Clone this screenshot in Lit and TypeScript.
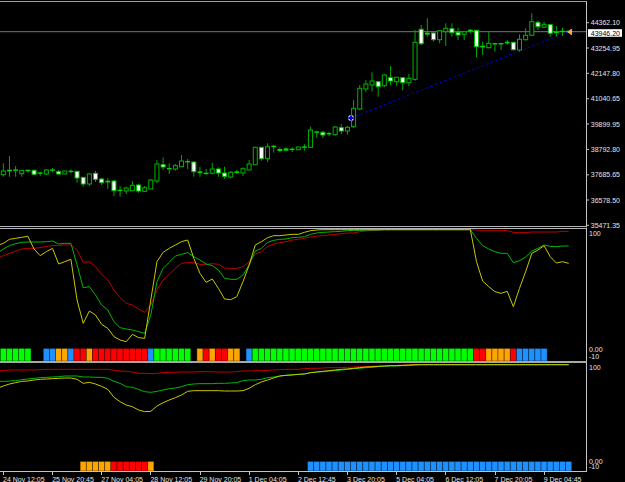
import { LitElement, html, svg, css } from "lit";
import { customElement } from "lit/decorators.js";

// bars sit on a fixed step, everything below is in page pixels
const barX = (i: number) => 3.33 + i * 6.145;
const flat = (n: number, v: number) => Array(n).fill(v) as number[];
const rep = (n: number, c: string) => c.repeat(n);

type Candle = [number, number, number, number, "h" | "w" | "g"];

const CANDLES: Candle[] = [
  [171, 174.7, 163.3, 176.7, "h"], [170, 171.7, 156, 176.7, "g"], [169.7, 171, 166, 176.7, "g"],
  [170.3, 173.7, 170.3, 176.7, "h"], [170, 171.7, 170, 172.7, "g"], [170.3, 174.3, 169.7, 175, "w"],
  [172.7, 173.7, 171.7, 176, "g"], [170, 174, 169.3, 175, "h"], [169.7, 170.7, 168, 172.3, "g"],
  [171.7, 174, 170, 174.3, "w"], [171, 174, 171, 174.3, "h"], [171, 171.7, 169.3, 173.3, "g"],
  [171.3, 178, 171.3, 182.7, "w"], [177.3, 184, 177.3, 186.7, "w"], [174, 184, 173.3, 186, "h"],
  [173.3, 179.3, 171, 182, "w"], [179, 182.7, 177.7, 185, "w"], [181, 182.7, 178.3, 189, "g"],
  [181, 190.7, 180, 196, "w"], [190, 191, 186, 196.7, "g"], [188, 191, 186.7, 194, "h"],
  [185.3, 190.7, 181, 191.3, "h"], [185, 191, 184, 192.7, "w"], [187.7, 191.3, 186, 192, "h"],
  [180, 189, 179, 189, "h"], [164, 181, 160, 183.3, "h"], [164.7, 167, 157.3, 170, "w"],
  [168.3, 169, 163.3, 174, "g"], [165.7, 169, 164, 170.7, "h"], [161, 166.7, 155, 167.3, "h"],
  [161.3, 162.3, 159, 169.3, "g"], [162, 171.7, 162, 176.7, "w"], [171.7, 173.3, 167, 176.7, "g"],
  [173, 174, 169, 174.7, "g"], [169, 173.3, 162.7, 174.3, "h"], [169, 173, 167.3, 176.7, "w"],
  [173, 176.3, 166.7, 178.7, "w"], [172.3, 177, 171, 178.3, "h"], [171.7, 173.3, 170, 174.3, "g"],
  [168.7, 173, 167.3, 176, "h"], [164, 170, 160, 170, "h"], [147.3, 164.7, 147.3, 164.7, "h"],
  [147.3, 158.7, 147.3, 160.7, "w"], [146.7, 158.7, 143.3, 162, "h"], [146, 146.7, 145, 152.7, "g"],
  [149.3, 151.3, 147.3, 152, "g"], [148.7, 151, 147.3, 151.3, "g"], [149, 150, 147.3, 152, "g"],
  [147, 149.7, 147, 150, "h"], [146.7, 148, 144.3, 150.7, "g"], [130, 147.3, 126.7, 148, "h"],
  [131.7, 132.7, 130.7, 137.7, "g"], [132.3, 135, 131, 138, "w"], [133.3, 134.3, 131.7, 136, "g"],
  [127, 134.7, 126, 135.7, "h"], [127.7, 131, 124, 134, "w"], [127.3, 131, 126, 134.7, "h"],
  [108.3, 126.7, 100, 127.7, "h"], [88.3, 109, 85, 110.3, "h"], [84, 89, 80, 92.3, "h"],
  [81, 85, 72.3, 91.7, "h"], [81.7, 86.7, 81, 96.7, "w"], [75, 85.7, 74.3, 87.3, "h"],
  [77.7, 81, 66, 85, "w"], [77.3, 81.7, 77, 85.7, "h"], [77.7, 82.7, 77.7, 90.3, "w"],
  [78.3, 82.7, 74, 86, "h"], [42.3, 79.3, 30, 80.7, "h"], [29.3, 43.7, 25, 45, "w"],
  [33, 35, 18.3, 36.7, "g"], [33, 39.7, 31.7, 41.7, "w"], [30.7, 39.7, 30, 43.3, "h"],
  [28.3, 31.7, 23.3, 46, "h"], [28.7, 32.7, 23.3, 36.7, "w"], [32.3, 35, 27.7, 40, "w"],
  [31.7, 34.3, 31.7, 40, "h"], [30, 31.7, 29, 33.3, "g"], [30.3, 46.7, 30.3, 57.3, "w"],
  [46, 47.7, 41.7, 55, "g"], [43.3, 47.7, 32, 48.3, "h"], [43.3, 44.7, 43.3, 51.7, "g"],
  [43.3, 44.3, 43.3, 50, "g"], [42, 43.7, 40, 45, "g"], [42.3, 49.7, 41.7, 50.7, "w"],
  [39.3, 50, 34.3, 51.7, "h"], [35.3, 39.7, 28.3, 40.7, "h"], [21.7, 35.3, 13.3, 36, "h"],
  [22.3, 26.7, 20.7, 30, "w"], [24.3, 27.3, 21.7, 28, "h"], [24.7, 33.3, 24.7, 36.7, "w"],
  [32, 33, 26, 36.7, "g"], [31, 32.3, 27.7, 36, "g"], [31, 32, 31, 33, "g"],
];

// oscillator values: thirds of a pixel below the pane base, one per bar, first one is off-screen left
const UPPER = {
  base: 225,
  yellow: [
    62, 55, 43, 40, 37, 34, 72, 92, 80, 70, 117, 110, 103, 225, 295, 258, 270, 298, 310, 335, 345, 350, 328, 338, 340,
    225, 110, 82, 70, 60, 50, 45, 100, 145, 172, 162, 190, 222, 224, 215, 170, 120, 60, 50, 38, 32, 32, 30, 28, 28, 22,
    17, 15, ...flat(24, 14), 14, 110, 168, 185, 200, 205, 199, 245, 190, 140, 85, 75, 62, 95, 114, 110, 115,
  ],
  green: [
    85, 72, 62, 56, 52, 51, 51, 51, 50, 48, 57, 55, 55, 120, 188, 185, 210, 240, 255, 290, 308, 312, 315, 320, 325, 270,
    170, 130, 112, 93, 88, 83, 95, 105, 117, 122, 135, 160, 163, 163, 150, 120, 78, 70, 52, 46, 43, 42, 38, 37, 35, 28,
    24, 22, 21, 20, 19, 17, 16, 16, 15, 15, 15, ...flat(14, 14), 14, 40, 62, 72, 80, 85, 85, 113, 107, 96, 78, 70, 60,
    64, 65, 63, 63,
  ],
  red: [
    100, 92, 85, 78, 72, 70, 70, 68, 64, 62, 61, 60, 60, 75, 112, 110, 125, 148, 165, 195, 218, 235, 240, 252, 262, 240,
    195, 165, 148, 130, 115, 113, 113, 118, 118, 116, 118, 129, 130, 130, 125, 110, 88, 80, 65, 57, 53, 50, 45, 43, 40,
    36, 33, 32, 30, 28, 26, 24, 24, 20, 18, 16, 15, ...flat(14, 14), 14, 15, 16, 16, 16, 16, 17, 22, 23, 23, 21, 21, 21,
    21, 21, 19, 19,
  ],
};

const LOWER = {
  base: 360,
  yellow: [
    85, 78, 72, 68, 64, 63, 60, 58, 57, 56, 55, 54, 54, 58, 70, 67, 72, 79, 88, 112, 125, 135, 140, 150, 155, 154, 138,
    128, 120, 113, 105, 94, 92, 92, 92, 92, 92, 93, 93, 93, 92, 85, 74, 66, 60, 54, 48, 46, 45, 43, 42, 38, 36, 34, 32,
    30, 28, 27, 25, 23, 21, 20, 19, 18, 17, 17, 16, 15, 14, ...flat(25, 14),
  ],
  green: [
    64, 64, 63, 62, 59, 57, 55, 53, 52, 51, 50, 48, 48, 48, 51, 51, 52, 52, 55, 64, 70, 80, 82, 88, 95, 97, 94, 90, 86,
    84, 80, 74, 72, 71, 71, 71, 70, 70, 69, 68, 62, 60, 60, 58, 53, 51, 48, 46, 44, 43, 42, 38, 36, 35, 33, 32, 30, 28,
    26, 25, 23, 22, 20, 19, 18, 18, 17, 17, 15, ...flat(25, 14),
  ],
  red: [
    32, 32, 30, 30, 30, 30, 30, 29, 28, 28, 28, 28, 28, 28, 28, 28, 28, 28, 28, 31, 33, 34, 36, 40, 40, 41, 40, 38, 37,
    37, 36, 36, 36, 35, 35, 35, 36, 36, 36, 35, 33, 33, 32, 32, 31, 30, 29, 28, 28, 28, 26, 25, 25, 24, 23, 23, 23, 22,
    21, 20, 20, 19, 18, 18, 17, 16, 15, 15, 14, ...flat(25, 14),
  ],
};

const UPPER_BLOCKS =
  "ggggg..bboobrro" + rep(9, "r") + "b" + rep(6, "g") + ".or" + "orroo.b" + rep(36, "g") + "rroooorbbbbb";
const LOWER_BLOCKS = rep(13, ".") + "ooooo" + "rrrrrr" + "o" + rep(25, ".") + rep(43, "b");

const BLOCK_CLASS: Record<string, string> = { g: "b-green", b: "b-blue", o: "b-orange", r: "b-red" };

const PRICES: [string, number][] = [
  ["44362.10", 21.7], ["43254.95", 47], ["42147.80", 72.3], ["41040.65", 97.7], ["39899.95", 123],
  ["38792.80", 148.4], ["37685.65", 173.8], ["36578.50", 199], ["35471.35", 224.3],
];

const TIMES = [
  "24 Nov 12:05", "25 Nov 20:45", "27 Nov 04:05", "28 Nov 12:05", "29 Nov 20:05", "1 Dec 04:05",
  "2 Dec 12:45", "3 Dec 20:05", "5 Dec 04:05", "6 Dec 12:05", "7 Dec 20:05", "9 Dec 04:45",
];

@customElement("app-root")
export class AppRoot extends LitElement {
  static styles = css`
    :host {
      display: block;
      width: 625px;
      height: 482px;
      padding-top: 1px;
      box-sizing: border-box;
      background: #000;
      overflow: hidden;
      font-family: "Liberation Sans", Arial, sans-serif;
      font-size: 7px;
    }
    .pane {
      display: grid;
      grid-template-columns: 587px 38px;
    }
    .plot {
      border-right: 1px solid #c4c4c4;
      min-width: 0;
    }
    .main { height: 225px; }
    .main .plot { border-top: 1px solid #a0a0a0; }
    .ind-a { height: 135px; }
    .ind-a .plot { border-top: 3px double #b4b4b4; }
    .ind-b { height: 110px; }
    .ind-b .plot { border-top: 2px solid #a8a8a8; }
    svg {
      display: block;
      overflow: visible;
    }
    .plot svg { overflow: hidden; }
    .wick { stroke: #00a800; stroke-width: 1; }
    .body-h { fill: #000; stroke: #00b400; stroke-width: 1; }
    .body-w { fill: #fff; stroke: #00c000; stroke-width: 1; }
    .body-g { fill: #00d800; }
    .price-line { stroke: #787878; stroke-width: 1; }
    .trend { stroke: #0000d0; stroke-width: 1; stroke-dasharray: 3 2; fill: none; }
    .osc { fill: none; stroke-width: 1; }
    .l-yellow { stroke: #c8c800; }
    .l-green { stroke: #00b800; }
    .l-red { stroke: #c00000; }
    .block { stroke: rgba(0, 0, 0, 0.45); stroke-width: 0.8; }
    .b-green { fill: #00ff00; }
    .b-blue { fill: #1e90ff; }
    .b-orange { fill: #ffa500; }
    .b-red { fill: #ff0000; }
    .lbl { fill: #e4e4e4; font-size: 7px; }
    .lbl-box { fill: #000; font-size: 7px; }
    .box { fill: #fff; }
    .tick { stroke: #c4c4c4; stroke-width: 1; }
    .time-axis {
      display: flex;
      width: 587px;
      height: 10px;
      box-sizing: border-box;
      padding-left: 3px;
      border-top: 1px solid #c4c4c4;
      color: #e4e4e4;
      line-height: 7px;
    }
    .time {
      flex: 0 0 49.16px;
      white-space: nowrap;
    }
    .time i {
      display: block;
      width: 1px;
      height: 3px;
      margin-bottom: 1px;
      background: #c4c4c4;
    }
  `;

  private candle(c: Candle, i: number) {
    const [top, bottom, hi, lo, kind] = c;
    const x = barX(i);
    const wick = svg`<line class="wick" x1=${x} x2=${x} y1=${hi} y2=${lo}></line>`;
    if (kind === "g") {
      return svg`${wick}<rect class="body-g" x=${x - 2.4} y=${top - 0.3} width="4.8" height=${Math.max(bottom - top, 1.4)}></rect>`;
    }
    return svg`${wick}<rect class="body-${kind}" x=${x - 2} y=${top} width="4" height=${bottom - top}></rect>`;
  }

  private osc(base: number, values: number[], cls: string) {
    const pts = values.map((v, i) => `${barX(i - 1).toFixed(2)},${(base + v / 3).toFixed(2)}`).join(" ");
    return svg`<polyline class="osc ${cls}" points=${pts}></polyline>`;
  }

  private blocks(pattern: string, top: number, bottom: number) {
    return [...pattern].map((c, i) =>
      c === "."
        ? null
        : svg`<rect class="block ${BLOCK_CLASS[c]}" x=${barX(i) - 3.07} y=${top} width="6.145" height=${bottom - top}></rect>`
    );
  }

  private oscPlot(s: typeof UPPER) {
    return svg`
      ${this.osc(s.base, s.red, "l-red")}
      ${this.osc(s.base, s.green, "l-green")}
      ${this.osc(s.base, s.yellow, "l-yellow")}
    `;
  }

  render() {
    return html`
      <div class="pane main">
        <div class="plot">
          <svg width="586" height="224" viewBox="0 2 586 224">
            <line class="price-line" x1="0" x2="586" y1="31.7" y2="31.7"></line>
            <line class="trend" x1="351" y1="118" x2="568" y2="32"></line>
            ${CANDLES.map((c, i) => this.candle(c, i))}
            <circle cx="351" cy="118" r="2.9" fill="#c4c8d4"></circle>
            <path d="M350 115.4h2v1.6h1.6v2h-1.6v1.6h-2v-1.6h-1.6v-2h1.6z" fill="#0000e0"></path>
            <path d="M571.4 28.8v6.2l-4.4-3.1z" fill="#f0a850"></path>
            <line x1="571.6" x2="571.6" y1="29" y2="35" stroke="#f8e8d0" stroke-width="0.7"></line>
          </svg>
        </div>
        <svg width="38" height="226" viewBox="587 0 38 226">
          ${PRICES.map(
            ([t, y]) => svg`
              <line class="tick" x1="587" x2="589" y1=${y} y2=${y}></line>
              <text class="lbl" x="590.8" y=${y + 2.5}>${t}</text>
            `
          )}
          <rect class="box" x="588" y="28.2" width="34" height="7.6"></rect>
          <text class="lbl-box" x="590.8" y="34.5">43946.20</text>
        </svg>
      </div>
      <div class="pane ind-a">
        <div class="plot">
          <svg width="586" height="132" viewBox="0 229 586 132">
            ${this.oscPlot(UPPER)}
            ${this.blocks(UPPER_BLOCKS, 348.4, 361)}
          </svg>
        </div>
        <svg width="38" height="135" viewBox="587 226 38 135">
          <text class="lbl" x="589" y="236">100</text>
          <text class="lbl" x="589" y="351.5">0.00</text>
          <text class="lbl" x="589" y="358.5">-10</text>
        </svg>
      </div>
      <div class="pane ind-b">
        <div class="plot">
          <svg width="586" height="108" viewBox="0 363 586 108">
            ${this.oscPlot(LOWER)}
            ${this.blocks(LOWER_BLOCKS, 461.4, 471)}
          </svg>
        </div>
        <svg width="38" height="110" viewBox="587 361 38 110">
          <text class="lbl" x="589" y="370.2">100</text>
          <text class="lbl" x="589" y="464">0.00</text>
          <text class="lbl" x="589" y="469.2">-10</text>
        </svg>
      </div>
      <div class="time-axis">
        ${TIMES.map((t) => html`<div class="time"><i></i>${t}</div>`)}
      </div>
    `;
  }
}
